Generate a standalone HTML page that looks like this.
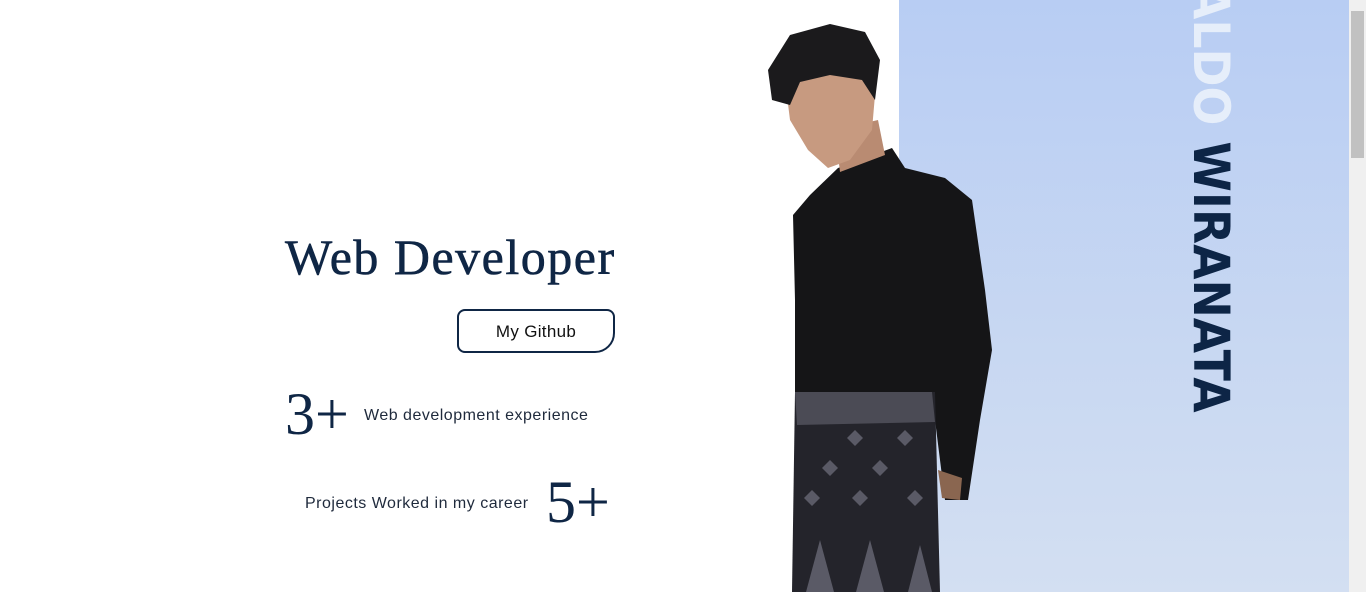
<!DOCTYPE html>
<html><head><meta charset="utf-8"><style>
html,body{margin:0;padding:0;}
body{width:1366px;height:592px;overflow:hidden;background:#fff;position:relative;font-family:"Liberation Sans",sans-serif;}
.panel{position:absolute;left:899px;top:0;width:450px;height:592px;background:linear-gradient(#b8cdf3,#d3dff2);}
.sb{position:absolute;left:1349px;top:0;width:17px;height:592px;background:#f0f0f0;}
.thumb{position:absolute;left:1351px;top:11px;width:13px;height:147px;background:#c1c1c1;}
.name{position:absolute;left:1186px;top:-16px;writing-mode:vertical-rl;font-family:"DejaVu Sans","Liberation Sans",sans-serif;font-weight:900;font-size:50px;letter-spacing:0px;line-height:50px;white-space:nowrap;transform:scaleY(0.915);transform-origin:top left;}
.name .a{color:#e6eefa}.name .b{color:#0d2546}
h1{position:absolute;left:285px;top:228px;margin:0;font-family:"Liberation Serif",serif;font-weight:normal;font-size:50px;color:#0f2645;letter-spacing:1.5px;-webkit-text-stroke:0.6px #0f2645;}
.btn{position:absolute;left:457px;top:309px;width:154px;height:40px;border:2px solid #0f2645;border-radius:8px 8px 20px 8px;box-sizing:content-box;font-size:17px;color:#111;text-align:center;line-height:41px;letter-spacing:0.3px;}
.num{position:absolute;font-family:"Liberation Serif",serif;font-size:60px;color:#0f2645;}
.txt{position:absolute;font-size:16px;color:#1f2a3c;letter-spacing:0.5px;}
</style></head><body>
<div class="panel"></div>
<div class="name"><span class="a">ALDO</span> <span class="b">WIRANATA</span></div>
<svg style="position:absolute;left:0;top:0" width="1366" height="592">
  <path d="M838 168 L892 148 L905 168 L945 178 L972 200 L985 290 L992 350 L980 420 L968 500 L945 500 L935 420 L930 395 L795 395 L795 300 L793 215 L810 195 Z" fill="#151517"/>
  <path d="M795 392 L935 392 L940 592 L792 592 Z" fill="#24242b"/>
  <path d="M795 392 L932 392 L935 422 L797 425 Z" fill="#4b4b55"/>
  <g fill="#5a5a66">
    <path d="M855 430 l8 8 l-8 8 l-8 -8z"/><path d="M905 430 l8 8 l-8 8 l-8 -8z"/>
    <path d="M830 460 l8 8 l-8 8 l-8 -8z"/><path d="M880 460 l8 8 l-8 8 l-8 -8z"/>
    <path d="M812 490 l8 8 l-8 8 l-8 -8z"/><path d="M860 490 l8 8 l-8 8 l-8 -8z"/><path d="M915 490 l8 8 l-8 8 l-8 -8z"/>
    <path d="M820 540 l14 52 l-28 0z"/><path d="M870 540 l14 52 l-28 0z"/><path d="M920 545 l12 47 l-24 0z"/>
  </g>
  <path d="M938 470 L962 478 L960 500 L942 498 Z" fill="#8a6650"/>
  <path d="M835 130 L878 120 L885 155 L840 172 Z" fill="#b98b72"/>
  <path d="M785 80 L860 70 L875 95 L872 130 L850 160 L828 168 L808 150 L790 120 Z" fill="#c79a80"/>
  <path d="M768 70 L790 35 L830 24 L865 32 L880 60 L875 100 L862 80 L830 75 L800 82 L790 105 L772 100 Z" fill="#1b1a1c"/>
</svg>
<h1>Web Developer</h1>
<div class="btn">My Github</div>
<div class="num" style="left:285px;top:380px;">3+</div>
<div class="txt" style="left:364px;top:407px;">Web development experience</div>
<div class="txt" style="left:305px;top:495px;">Projects Worked in my career</div>
<div class="num" style="left:546px;top:468px;">5+</div>
<div class="sb"></div><div class="thumb"></div>
</body></html>
